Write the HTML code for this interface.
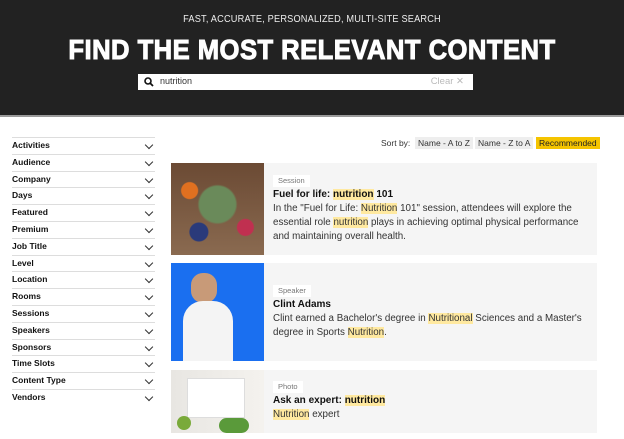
<!DOCTYPE html>
<html><head><style>
*{margin:0;padding:0;box-sizing:border-box}
body{width:624px;height:439px;overflow:hidden;background:#fff;font-family:"Liberation Sans",sans-serif;position:relative}
.hdr{position:absolute;left:0;top:0;width:624px;height:117px;background:#222;border-bottom:2px solid #9a9a9a}
.sub{position:absolute;top:14px;width:624px;text-align:center;color:#eee;font-size:10px;letter-spacing:.2px;transform:scaleX(.92)}
.h1{position:absolute;top:34px;width:624px;text-align:center;color:#fff;font-size:28px;font-weight:bold;letter-spacing:.5px;transform:scaleX(.915);-webkit-text-stroke:1px #fff}
.search{position:absolute;left:138px;top:74px;width:335px;height:16px;background:#fff;font-size:9px;color:#333}
.side{position:absolute;left:12px;top:137px;width:143px}
.side div{height:16.8px;border-top:1px solid #ddd;font-size:8.5px;font-weight:bold;color:#111;line-height:15px;position:relative}
.side div:after{content:"";position:absolute;right:3px;top:4px;width:5px;height:5px;border-right:1.5px solid #333;border-bottom:1.5px solid #333;transform:rotate(45deg)}
.sort{position:absolute;top:137px;font-size:8.5px;color:#333;height:12px;line-height:12px;padding:0 3px}
.card{position:absolute;left:171px;width:426px;background:#f5f5f5}
.img{position:absolute;left:0;top:0;width:93px;height:100%}
.txt{position:absolute;left:102px;font-size:9.8px;color:#333;line-height:14px}
.tag{display:inline-block;background:#fff;color:#777;font-size:7.5px;padding:1px 5px;margin-bottom:1px;line-height:10px}
.t{font-weight:bold;color:#111;font-size:10px}
mark{background:#ffe9a0;color:inherit}
</style></head><body>
<div class="hdr">
<div class="sub">FAST, ACCURATE, PERSONALIZED, MULTI-SITE SEARCH</div>
<div class="h1">FIND THE MOST RELEVANT CONTENT</div>
<div class="search">
<svg style="position:absolute;left:6px;top:3px" width="10" height="10" viewBox="0 0 10 10"><circle cx="4" cy="4" r="3" fill="none" stroke="#111" stroke-width="1.6"/><path d="M6 6L9 9" stroke="#111" stroke-width="1.8"/></svg>
<span style="position:absolute;left:22px;top:2px">nutrition</span>
<span style="position:absolute;right:9px;top:2px;color:#bbb;font-size:9.5px">Clear ✕</span>
</div>
</div>
<div class="side">
<div>Activities</div><div>Audience</div><div>Company</div><div>Days</div><div>Featured</div><div>Premium</div><div>Job Title</div><div>Level</div><div>Location</div><div>Rooms</div><div>Sessions</div><div>Speakers</div><div>Sponsors</div><div>Time Slots</div><div>Content Type</div><div>Vendors</div>
</div>
<div class="sort" style="left:378px">Sort by:</div>
<div class="sort" style="left:415px;background:#eee">Name - A to Z</div>
<div class="sort" style="left:475px;background:#eee">Name - Z to A</div>
<div class="sort" style="left:536px;background:#f5c400;color:#222">Recommended</div>

<div class="card" style="top:163px;height:92px">
<div class="img" style="background:radial-gradient(circle at 50% 45%,#6a8a5a 0 18px,transparent 20px),radial-gradient(circle at 20% 30%,#e07020 0 8px,transparent 9px),radial-gradient(circle at 30% 75%,#2a3a7a 0 9px,transparent 10px),radial-gradient(circle at 80% 70%,#c03050 0 8px,transparent 9px),linear-gradient(#6b4a34,#8a6a50)"></div>
<div class="txt" style="top:11px"><span class="tag">Session</span><br><span class="t">Fuel for life: <mark>nutrition</mark> 101</span><br>In the "Fuel for Life: <mark>Nutrition</mark> 101" session, attendees will explore the<br>essential role <mark>nutrition</mark> plays in achieving optimal physical performance<br>and maintaining overall health.</div>
</div>
<div class="card" style="top:263px;height:98px">
<div class="img" style="background:#1a6ff0;overflow:hidden"><div style="position:absolute;left:20px;top:10px;width:26px;height:30px;border-radius:12px;background:#c89a78"></div><div style="position:absolute;left:12px;top:38px;width:50px;height:60px;border-radius:20px 20px 0 0;background:#f4f4f4"></div></div>
<div class="txt" style="top:21px"><span class="tag">Speaker</span><br><span class="t">Clint Adams</span><br>Clint earned a Bachelor's degree in <mark>Nutritional</mark> Sciences and a Master's<br>degree in Sports <mark>Nutrition</mark>.</div>
</div>
<div class="card" style="top:370px;height:63px">
<div class="img" style="background:linear-gradient(90deg,#e8e6e2,#f4f2ee)"><div style="position:absolute;left:16px;top:8px;width:58px;height:40px;background:#fff;border:1px solid #ddd"></div><div style="position:absolute;left:6px;top:46px;width:14px;height:14px;border-radius:50%;background:#7aaa3a"></div><div style="position:absolute;left:48px;top:48px;width:30px;height:15px;background:#5a9a3a;border-radius:8px"></div></div>
<div class="txt" style="top:10px"><span class="tag">Photo</span><br><span class="t">Ask an expert: <mark>nutrition</mark></span><br><mark>Nutrition</mark> expert</div>
</div>
</body></html>
